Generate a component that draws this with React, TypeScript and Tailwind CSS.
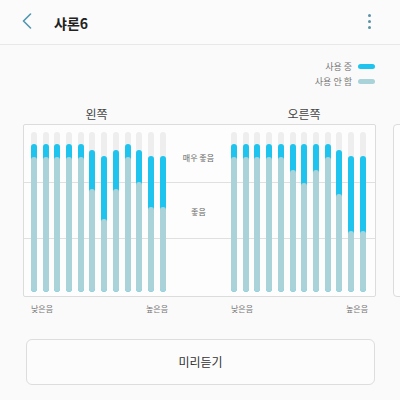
import React from "react";

type Bar = [number, number];

const LEFT: Bar[] = [
  [11.7, 25], [11.7, 25], [11.7, 25], [11.7, 25], [11.7, 25],
  [18.3, 56.7], [24.3, 87.3], [18.3, 56.7], [11.7, 25], [18.3, 50],
  [24.3, 75], [24.3, 75],
];
const RIGHT: Bar[] = [
  [11.7, 25], [11.7, 25], [11.7, 25], [11.7, 25], [11.7, 25],
  [11.7, 37.7], [11.7, 51], [11.7, 37.7], [11.7, 25], [18.3, 62.3],
  [24.3, 99.3], [24.3, 99.3],
];

const H = 160;

function BarCol({ b }: { b: Bar }) {
  return (
    <div className="w-[6px] h-[160px] rounded-full bg-[#eeeeee] flex flex-col justify-end overflow-hidden shrink-0">
      <div
        className="w-full rounded-full bg-[#1fc4ee] flex flex-col justify-end"
        style={{ height: H - b[0] }}
      >
        <div className="w-full rounded-full bg-[#a9d2d9]" style={{ height: H - b[1] }} />
      </div>
    </div>
  );
}

function Group({ bars }: { bars: Bar[] }) {
  return (
    <div className="flex gap-[5.7px] w-[134.7px] shrink-0">
      {bars.map((b, i) => (
        <BarCol key={i} b={b} />
      ))}
    </div>
  );
}

export default function App() {
  const font = { fontFamily: '"Noto Sans CJK KR", "Noto Sans", sans-serif' };
  return (
    <div className="w-[400px] h-[400px] overflow-hidden bg-[#fafafa] text-[#333]" style={font}>
      {/* header */}
      <div className="h-[45px] flex items-center border-b border-[#e8e8e8] bg-[#fbfbfb]">
        <svg className="ml-[22px] mt-[-2px]" width="10" height="16" viewBox="0 0 10 16" fill="none">
          <path d="M8.5 1 L1.5 8 L8.5 15" stroke="#4f98b0" strokeWidth="1.6" strokeLinecap="round" strokeLinejoin="round" />
        </svg>
        <div className="ml-[22px] text-[14px] font-bold text-[#222] mt-[2px]">샤론6</div>
        <div className="ml-auto mr-[29px] flex flex-col gap-[2.5px] mt-[-1px]">
          <div className="w-[3.5px] h-[3.5px] rounded-full bg-[#5a93a6]" />
          <div className="w-[3.5px] h-[3.5px] rounded-full bg-[#5a93a6]" />
          <div className="w-[3.5px] h-[3.5px] rounded-full bg-[#5a93a6]" />
        </div>
      </div>

      {/* legend */}
      <div className="mt-[14px] flex flex-col items-end pr-[25px] text-[9px] text-[#777]">
        <div className="h-[15px] flex items-center gap-[6px]">
          <span>사용 중</span>
          <div className="w-[17px] h-[5px] rounded-full bg-[#1fc4ee]" />
        </div>
        <div className="h-[15px] flex items-center gap-[6px]">
          <span>사용 안 함</span>
          <div className="w-[17px] h-[5px] rounded-full bg-[#a9d2d9]" />
        </div>
      </div>

      {/* side labels */}
      <div className="mt-[17px] h-[16px] ml-[23px] flex items-center text-[12px] text-[#444]">
        <div className="w-[147px] text-center">왼쪽</div>
        <div className="w-[62px]" />
        <div className="w-[144px] text-center">오른쪽</div>
      </div>

      {/* chart row */}
      <div className="mt-[2px] flex">
        <div className="ml-[23px] w-[353px] h-[173px] shrink-0 border border-[#dcdcdc] rounded-[2px] bg-[#fdfdfd] relative flex pl-[7px] pt-[7px]">
          <div className="absolute left-0 right-0 top-[57px] h-px bg-[#e0e0e0]" />
          <div className="absolute left-0 right-0 top-[113px] h-px bg-[#e0e0e0]" />
          <div className="relative flex">
            <Group bars={LEFT} />
            <div className="w-[65.4px] shrink-0 flex flex-col items-center text-[8px] text-[#666] pt-[20px]">
              <div className="h-[12px] leading-[12px]">매우 좋음</div>
              <div className="h-[12px] leading-[12px] mt-[42px]">좋음</div>
            </div>
            <Group bars={RIGHT} />
          </div>
        </div>
        <div className="ml-[17px] w-[353px] h-[173px] shrink-0 border border-[#dcdcdc] rounded-[4px] bg-[#fdfdfd]" />
      </div>

      {/* axis labels */}
      <div className="mt-[6px] h-[12px] ml-[24px] pl-[7px] flex items-center text-[8px] text-[#777]">
        <div className="w-[137px] flex justify-between">
          <span>낮은음</span>
          <span>높은음</span>
        </div>
        <div className="w-[63px]" />
        <div className="w-[137px] flex justify-between">
          <span>낮은음</span>
          <span>높은음</span>
        </div>
      </div>

      {/* button */}
      <div className="mt-[24px] ml-[26px] w-[349px] h-[46px] border border-[#dddddd] rounded-[6px] bg-[#fcfcfc] flex items-center justify-center text-[12px] text-[#333]">
        미리듣기
      </div>
    </div>
  );
}
